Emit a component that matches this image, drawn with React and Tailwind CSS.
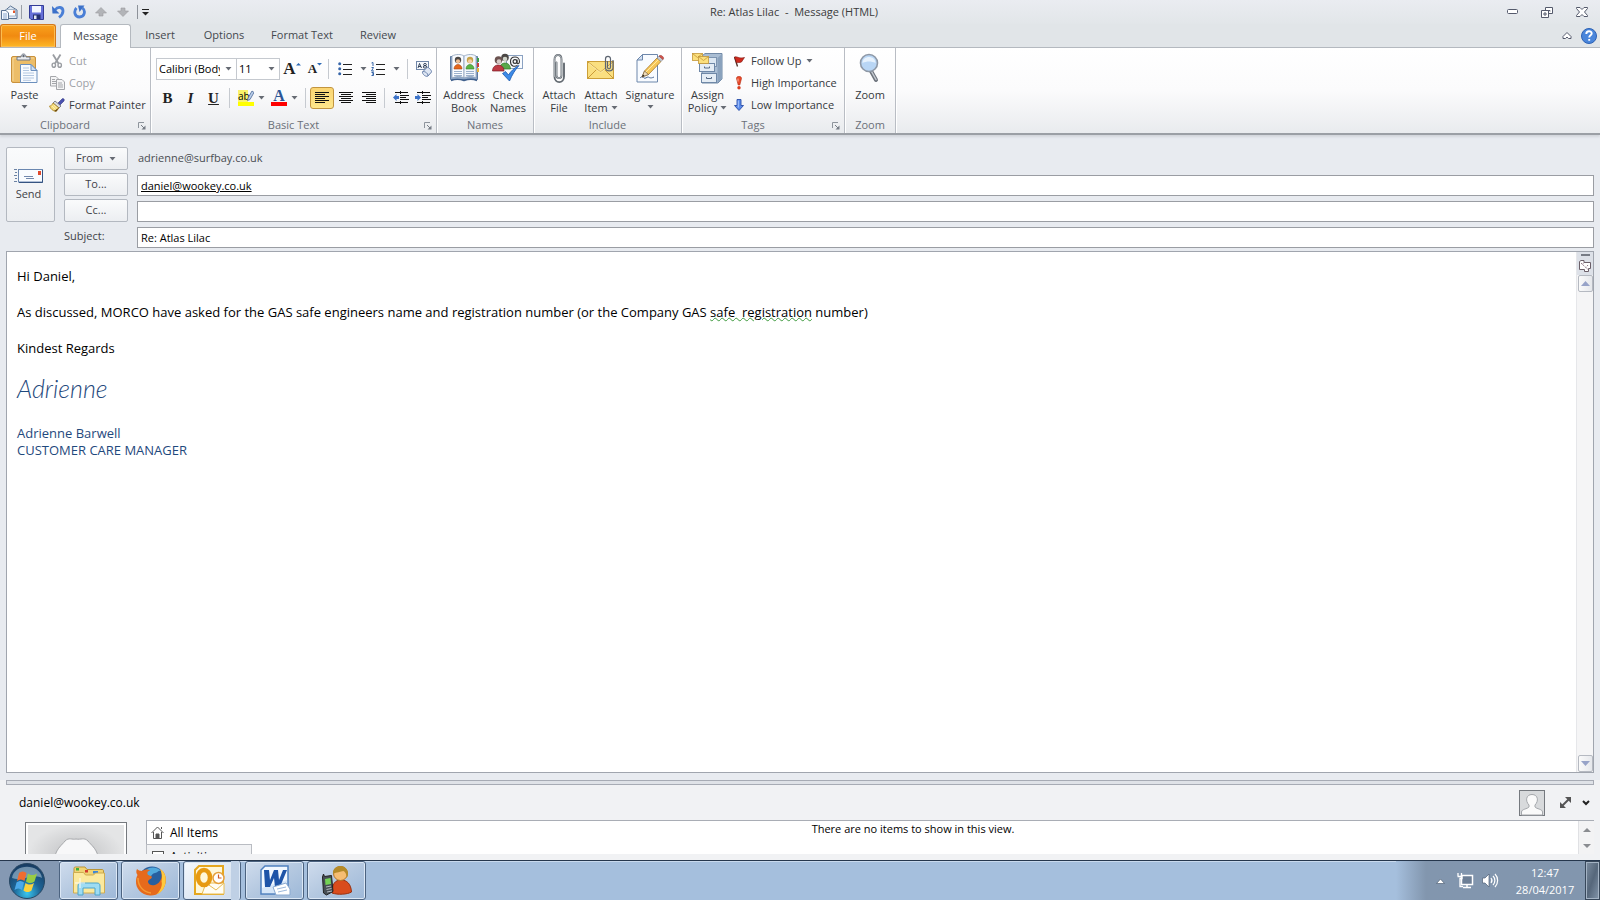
import React from "react";

const FONT = "font-['Open_Sans','Noto_Sans',sans-serif]";

function Caret({ className = "" }) {
  return (
    <svg width="7" height="4" viewBox="0 0 7 4" className={"shrink-0 " + className} aria-hidden="true">
      <path d="M0.5 0h6L3.5 3.6z" fill="#666b73" />
    </svg>
  );
}

function Launcher({ label }) {
  return (
    <button aria-label={label} className="absolute right-1 bottom-[3px]">
      <svg width="8" height="8" viewBox="0 0 8 8">
        <path d="M0.5 6V0.5H6" fill="none" stroke="#8e949c" />
        <path d="M3 3l3 3" stroke="#777d86" />
        <path d="M7.5 3.5v4h-4z" fill="#777d86" />
      </svg>
    </button>
  );
}

function Group({ label, width, launcher, children }) {
  return (
    <section
      aria-label={label}
      className={"relative flex shrink-0 flex-col border-r border-[#b9bdc4] shadow-[1px_0_0_#fff] " + width}
    >
      <div className="flex flex-1">{children}</div>
      <div className="h-[17px] text-center text-[11px] leading-[17px] text-[#6b7079]">{label}</div>
      {launcher && <Launcher label={label + " options"} />}
    </section>
  );
}

function BigButton({ icon, lines, width, caret }) {
  return (
    <button className={"flex shrink-0 flex-col items-center justify-start pt-1 text-[11px] leading-[13px] text-[#363a40] " + width}>
      <span className="flex h-[36px] items-start pt-px">{icon}</span>
      {lines.map((t, i) => (
        <span key={t} className="flex items-center gap-[3px] whitespace-nowrap">
          {t}
          {caret === "inline" && i === lines.length - 1 && <Caret />}
        </span>
      ))}
      {caret === "below" && <Caret className="mt-1" />}
    </button>
  );
}

function SmallButton({ icon, label, disabled, caret }) {
  return (
    <button
      disabled={disabled}
      className={
        "flex h-[22px] items-center gap-1 text-[11px] whitespace-nowrap " +
        (disabled ? "text-[#9da0a5]" : "text-[#363a40]")
      }
    >
      <span className="flex w-4 justify-center">{icon}</span>
      {label}
      {caret && <Caret />}
    </button>
  );
}

function Sep() {
  return <span className="h-[20px] w-px shrink-0 bg-[#c6cad0]" />;
}

/* ---------- icons ---------- */

const PasteIcon = () => (
  <svg width="28" height="32" viewBox="0 0 28 32">
    <rect x="0.5" y="3.5" width="24" height="26" rx="1.5" fill="#ecbd68" stroke="#c9913c" />
    <path d="M2 28V5h21" fill="none" stroke="#f7d798" />
    <path d="M6 7V4h4c0-4 5-4 5 0h4v3z" fill="#e8eaee" stroke="#6f7683" />
    <circle cx="12.500" cy="3" r="1.200" fill="#626a77" />
    <path d="M9.500 11.500H20l6 6V29.500H9.500z" fill="#f8fbff" stroke="#6b8fbd" />
    <path d="M20 11.500v6h6z" fill="#cfdff2" stroke="#6b8fbd" />
    <path d="M12 15h6M12 17.500h6M12 20h11M12 22.500h11M12 25h11M12 27.300h8" stroke="#b3c7e0" />
  </svg>
);

const CutIcon = () => (
  <svg width="12" height="14" viewBox="0 0 12 14" fill="none" stroke="#9a9da2">
    <path d="M2 0.500l5.500 9M9.500 0.500L4 9.500" strokeWidth="1.800" />
    <ellipse cx="2.800" cy="11.200" rx="1.700" ry="2.100" strokeWidth="1.400" />
    <ellipse cx="8.700" cy="11.200" rx="1.700" ry="2.100" strokeWidth="1.400" />
  </svg>
);

const CopyIcon = () => (
  <svg width="15" height="14" viewBox="0 0 15 14" fill="#f4f4f5" stroke="#a4a6aa">
    <path d="M0.500 0.500H6l2.500 2.500v7h-8z" />
    <path d="M2 3.500h3M2 5.500h4M2 7.500h4" />
    <path d="M6.500 3.500H12l2.500 2.500v7.500h-8z" />
    <path d="M8 7h4M8 9h5M8 11h5" />
  </svg>
);

const PainterIcon = () => (
  <svg width="16" height="14" viewBox="0 0 16 14">
    <path d="M9 5l4-4c1-1 3 0 2 2l-4 4z" fill="#4a51b0" stroke="#30357f" strokeWidth="0.600" />
    <path d="M6 3l6 5-2 2-6-5z" fill="#d9dbe0" stroke="#555a63" strokeWidth="0.700" />
    <path d="M4 5l6 5-3 3.500C4 13 1.500 11 0.500 8 2 8 3 7 4 5z" fill="#f5dc7a" stroke="#a88325" strokeWidth="0.800" />
    <path d="M3 8l4 4M5 7l3 3.500" stroke="#fff3bd" strokeWidth="0.800" />
    <path d="M5 13l5-3.500L7.500 13.500z" fill="#6b4b12" />
  </svg>
);

const AddressBookIcon = () => (
  <svg width="31" height="30" viewBox="0 0 31 30">
    <path d="M1.500 3.500h27v23h-27z" fill="#8ea6c5" stroke="#5f7ba0" />
    <path d="M28 5h2v4h-2z" fill="#3b9b48" /><path d="M28 10h2v4h-2z" fill="#c6403a" /><path d="M28 15h2v4h-2z" fill="#e9b53c" />
    <path d="M3 3c4-2 9-2 12 0v22c-3-2-8-2-12 0z" fill="#fafcff" stroke="#8b9fba" strokeWidth="0.800" />
    <path d="M15 3c4-2 9-2 12 0v22c-3-2-8-2-12 0z" fill="#f1f6fc" stroke="#8b9fba" strokeWidth="0.800" />
    <circle cx="9" cy="7" r="3.200" fill="#4b4745" /><circle cx="9" cy="8.300" r="2.100" fill="#eebd93" />
    <path d="M5 16c0-6 8-6 8 0z" fill="#e5671c" stroke="#a94410" strokeWidth="0.600" />
    <circle cx="21" cy="7" r="3.200" fill="#c8a246" /><circle cx="21" cy="8.300" r="2.100" fill="#f3cda6" />
    <path d="M17 16c0-6 8-6 8 0z" fill="#5cb545" stroke="#36822a" strokeWidth="0.600" />
    <path d="M5 18.500h8M5 20.500h8M5 22.500h8M17 18.500h8M17 20.500h8M17 22.500h8" stroke="#9bb0cb" />
    <path d="M2 27.500c6-2 10-1 13 0 3-1 8-2 13 0" fill="none" stroke="#3f5f8c" strokeWidth="1.400" />
  </svg>
);

const CheckNamesIcon = () => (
  <svg width="32" height="30" viewBox="0 0 32 30">
    <rect x="14.500" y="2.500" width="16" height="13" fill="#f9fbfe" stroke="#8ba2c2" />
    <circle cx="13" cy="4.500" r="3.800" fill="#4b4745" /><circle cx="13" cy="6" r="2.300" fill="#cfd3c8" />
    <path d="M7.500 16c0-8 11-8 11 0z" fill="#58a94b" stroke="#2e7a2a" strokeWidth="0.700" />
    <circle cx="6.500" cy="7" r="3.800" fill="#6b5350" /><circle cx="7" cy="8.500" r="2.300" fill="#d8c9c6" />
    <path d="M0.500 18c0-8 11.500-8 11.500 0z" fill="#bd3a44" stroke="#7b1d26" strokeWidth="0.700" />
    <circle cx="23" cy="8.500" r="1.900" fill="none" stroke="#333" strokeWidth="1.200" />
    <path d="M25 6.500v3c0 2 2.500 1.500 2.500-1 0-6-9-6-9 0 0 5 4 5.500 7 4" fill="none" stroke="#333" strokeWidth="1.100" />
    <path d="M10.500 20.500l3-2 3 3.500C19 18 22 15 27 12.500 23 17 20 22 17.500 28z" fill="#3d8be8" stroke="#1c58ae" strokeWidth="0.800" />
  </svg>
);

const Clip = ({ w, h }) => (
  <svg width={w} height={h} viewBox="0 0 12 30" fill="none" strokeLinecap="round">
    <path d="M3.500 9v13c0 3.500 5 3.500 5 0V6c0-6-7-6-7 0v17c0 7.500 9.500 7.500 9.500 0V10" stroke="#646b72" strokeWidth="1.900" />
    <path d="M3.500 9v13c0 3.500 5 3.500 5 0V6c0-6-7-6-7 0v17" stroke="#d4d9dc" strokeWidth="0.600" />
  </svg>
);

const AttachItemIcon = () => (
  <svg width="28" height="28" viewBox="0 0 28 28">
    <rect x="0.500" y="8.500" width="26" height="17" fill="#fadf80" stroke="#cc9f38" />
    <path d="M1 9l12.500 10L26 9M1 25l9-9M26 25l-9-9" fill="none" stroke="#c99a37" />
    <path d="M2 10.500l11.500 9 12-9" fill="none" stroke="#fff5c5" strokeWidth="0.700" />
    <path d="M20.500 8v6c0 2.500 3 2.500 3 0V6c0-3.500-5-3.500-5 0v8.500c0 4.500 7.500 4.500 7.500 0V7" fill="none" stroke="#5d6571" strokeWidth="1.200" />
  </svg>
);

const SignatureIcon = () => (
  <svg width="30" height="31" viewBox="0 0 30 31">
    <path d="M7.500 1.500h15v27.500h-20.500v-22z" fill="#f8fbff" stroke="#6d87ab" />
    <path d="M7.500 1.500V7H2z" fill="#d4e1f2" stroke="#6d87ab" />
    <path d="M5 25c2-2 3-1 4 0s3-1 4-1 2 2 6 0" fill="none" stroke="#4d6a96" />
    <path d="M7 24l2.500-6L22 5l4 3.500L13.500 21.500z" fill="#f6c758" stroke="#a8772a" strokeWidth="0.800" />
    <path d="M7 24l2.500-6 4 3.500z" fill="#efdcb9" stroke="#5b4a35" strokeWidth="0.600" /><path d="M7 24l1-2.500 1.500 1.300z" fill="#222" />
    <path d="M11 19L23.500 6.500" stroke="#ffe9a4" />
    <path d="M22 5l2-2 4 3.500-2 2z" fill="#c7ccd3" stroke="#7d838d" strokeWidth="0.600" />
    <path d="M24 3c2-2 6 1.500 4 3.500z" fill="#d8544c" stroke="#94302b" strokeWidth="0.600" />
  </svg>
);

const PolicyIcon = () => (
  <svg width="31" height="31" viewBox="0 0 31 31">
    <path d="M10 3l3-2.500h17V26l-4 4H10z" fill="#a9bdd3" stroke="#7189a6" />
    <path d="M25.500 5L30 1v25l-4.500 4z" fill="#8aa2bd" />
    <rect x="11.500" y="4.500" width="13" height="9" fill="#dce7f2" stroke="#7d94b0" />
    <rect x="7.500" y="10.500" width="15" height="8" fill="#e5edf5" stroke="#6f88a7" />
    <rect x="9.500" y="20.500" width="15" height="9" fill="#e5edf5" stroke="#6f88a7" />
    <path d="M12.500 13.500v1.500h5v-1.500M14.500 24v1.500h5V24" fill="none" stroke="#566b86" />
    <g fill="#fbdf7c" stroke="#c4973a" strokeWidth="0.800">
      <rect x="0.500" y="0.500" width="10" height="7" /><rect x="6.500" y="3.500" width="10" height="7" />
      <path d="M0.500 0.500l5 4 5-4M6.500 3.500l5 4 5-4" fill="none" />
    </g>
  </svg>
);

const FlagIcon = () => (
  <svg width="11" height="11" viewBox="0 0 11 11">
    <path d="M0.500 1l3 9.500" stroke="#4f3028" strokeWidth="1.300" />
    <path d="M0.500 1c3-1 4 2 10 0.500L7.500 6c-2 1-3 0-5 1z" fill="#cf2a1e" stroke="#7c1811" strokeWidth="0.600" />
  </svg>
);
const HighIcon = () => (
  <svg width="8" height="14" viewBox="0 0 8 14">
    <path d="M1.500 2.500c0-3 5-3 5 0L4.800 9H3.200z" fill="#e94a2a" stroke="#b02b13" strokeWidth="0.600" />
    <circle cx="4" cy="11.800" r="1.700" fill="#d83e20" /><path d="M3 2.500v3" stroke="#ffb9a2" />
  </svg>
);
const LowIcon = () => (
  <svg width="10" height="12" viewBox="0 0 10 12">
    <path d="M3 0.500h4v6h2.500L5 11.500 0.500 6.500H3z" fill="#5b8bea" stroke="#2b4fa9" strokeWidth="0.900" />
    <path d="M4.300 1.500v7" stroke="#a9c6ff" />
  </svg>
);
const ZoomIcon = () => (
  <svg width="22" height="31" viewBox="0 0 22 31">
    <path d="M12 18l5 9" stroke="#6e747d" strokeWidth="4" strokeLinecap="round" />
    <path d="M12.500 18.500l4.500 8" stroke="#c4c9d0" strokeWidth="1.500" strokeLinecap="round" />
    <circle cx="10" cy="10" r="8.500" fill="#b9d6f5" stroke="#8e98a6" strokeWidth="1.600" />
    <path d="M3.500 10c0-8 13-8 13 0-4-2-9-2-13 0z" fill="#e7f2fd" />
  </svg>
);

const rowsFor = {
  left: [[0, 14], [0, 10], [0, 14], [0, 10], [0, 14], [0, 10]],
  center: [[0, 14], [2, 12], [0, 14], [2, 12], [0, 14], [2, 12]],
  right: [[0, 14], [4, 14], [0, 14], [4, 14], [0, 14], [4, 14]],
};
function AlignIcon({ kind }) {
  return (
    <svg width="14" height="12" viewBox="0 0 14 12" stroke="#111" shapeRendering="crispEdges">
      {rowsFor[kind].map(([a, b], i) => (
        <path key={i} d={`M${a} ${i * 2 + 0.5}H${b}`} />
      ))}
    </svg>
  );
}
function IndentIcon({ out }) {
  return (
    <svg width="16" height="14" viewBox="0 0 16 14">
      <path d="M2 1.500h13M8 4.500h8M8 6.500h5M8 8.500h8M2 11.500h13" stroke="#111" shapeRendering="crispEdges" />
      <path d="M7.500 0v14" stroke="#111" strokeDasharray="1 1" />
      <path d={out ? "M0 6.500L3.500 3v2H6v3H3.500v2z" : "M6 6.500L2.500 3v2H0v3h2.500v2z"} fill="#3c73c8" />
    </svg>
  );
}
const BulletsIcon = () => (
  <svg width="15" height="14" viewBox="0 0 15 14">
    <g fill="#3564a8"><circle cx="1.700" cy="1.800" r="1.500" /><circle cx="1.700" cy="6.800" r="1.500" /><circle cx="1.700" cy="11.800" r="1.500" /></g>
    <path d="M5 2.500h9M5 7.500h9M5 12.500h9" stroke="#222" shapeRendering="crispEdges" />
  </svg>
);
const NumbersIcon = () => (
  <svg width="15" height="14" viewBox="0 0 15 14">
    <path d="M0.500 1L2 0.500V4M0.500 5.500h2L0.500 9H3M0.500 10.500h2v3h-2M1 12h1.500" fill="none" stroke="#3564a8" />
    <path d="M5 2.500h9M5 7.500h9M5 12.500h9" stroke="#222" shapeRendering="crispEdges" />
  </svg>
);
const ClearIcon = () => (
  <svg width="17" height="16" viewBox="0 0 17 16">
    <rect x="0.500" y="0.500" width="12" height="8" fill="#f6f9fd" stroke="#7187a8" />
    <path d="M2 7l1.500-4.500L5.500 7M2.500 5.500H5" fill="none" stroke="#25354f" strokeWidth="0.900" />
    <ellipse cx="9" cy="3.600" rx="1.400" ry="1.100" fill="none" stroke="#25354f" strokeWidth="0.900" />
    <ellipse cx="9" cy="5.900" rx="1.700" ry="1.200" fill="none" stroke="#25354f" strokeWidth="0.900" />
    <path d="M6.500 11L11 6.500c1-1 5 3 4.500 4.500L12 15c-2 1.500-6-2-5.500-4z" fill="#dfe7f4" stroke="#6a82ab" />
    <path d="M6.500 11c1-1.500 6 1 5.500 4" fill="none" stroke="#6a82ab" />
  </svg>
);
const HighlightIcon = () => (
  <span className="flex w-4 flex-col">
    <span className="relative flex h-[12px] items-center bg-gradient-to-r from-[#fbf36a] from-60% to-transparent to-60% font-['Open_Sans',sans-serif] text-[10px] leading-[12px] text-black">
      ab
      <svg className="absolute top-0 right-0" width="8" height="11" viewBox="0 0 8 11">
        <path d="M2 8l4-7 2 1.500L4 9.500 1.500 10.500z" fill="#b8cdea" stroke="#4b6794" strokeWidth="0.800" />
      </svg>
    </span>
    <span className="h-[4px] bg-[#ffff00]" />
  </span>
);

/* ---------- chrome ---------- */

function TitleBar() {
  return (
    <header className="flex h-6 items-center bg-gradient-to-b from-[#eaecf1] to-[#e2e6e9]">
      <div className="flex flex-1 items-center">
        <svg width="17" height="15" viewBox="0 0 17 15" className="ml-px">
          <path d="M3.500 6L9.500 1l6.500 4v8.500H3.500z" fill="#dfe8f4" stroke="#5b7393" />
          <path d="M5 4.500h9.500V11H5z" fill="#fff" stroke="#8499b5" strokeWidth="0.700" />
          <path d="M12 5.500h2v2.500h-2z" fill="#e2582c" />
          <path d="M0.500 5.500H5L7.500 8v6.500h-7z" fill="#f5f9ff" stroke="#5b7393" /><path d="M2 9h4M2 11h4M2 13h4" stroke="#8ba7cc" />
        </svg>
        <span className="ml-[3px] h-[14px] w-px bg-[#9a9fa7]" />
        <button aria-label="Save" className="ml-[7px]">
          <svg width="15" height="15" viewBox="0 0 15 15">
            <path d="M0.500 0.500h14v14H2L0.500 13z" fill="#6670d8" stroke="#333c96" />
            <path d="M3 1h9v6.500H3z" fill="#f3f6ff" /><path d="M4 9.500h7.500V14H4z" fill="#25306f" /><path d="M5 10.500h2.500V14H5z" fill="#e2e6f5" />
          </svg>
        </button>
        <button aria-label="Undo" className="ml-2">
          <svg width="13" height="14" viewBox="0 0 13 14">
            <path d="M3 5c3-4 8-3 8 1 0 3-2 5-4 6.500" fill="none" stroke="#4a7fd6" strokeWidth="2.800" />
            <path d="M0 1l0.500 7.500H7.500z" fill="#3b70c9" />
          </svg>
        </button>
        <button aria-label="Repeat" className="ml-2">
          <svg width="13" height="14" viewBox="0 0 13 14">
            <path d="M3.500 3C0.500 6 1.500 12 6.500 12s6.500-6 3-9" fill="none" stroke="#4a7fd6" strokeWidth="2.800" />
            <path d="M5 0.500h6.500l-5 6.500z" fill="#3b70c9" />
          </svg>
        </button>
        <button aria-label="Previous item" className="ml-[9px]">
          <svg width="12" height="10" viewBox="0 0 12 10"><path d="M6 0.500L11.500 6H8V9H4V6H0.500z" fill="#b2b4b8" stroke="#9a9ca0" strokeWidth="0.600" /></svg>
        </button>
        <button aria-label="Next item" className="ml-[10px]">
          <svg width="12" height="10" viewBox="0 0 12 10"><path d="M6 9.500L11.500 4H8V1H4v3H0.500z" fill="#b2b4b8" stroke="#9a9ca0" strokeWidth="0.600" /></svg>
        </button>
        <span className="ml-2 h-[14px] w-px bg-[#8d9299]" />
        <button aria-label="Customize toolbar" className="ml-1">
          <svg width="7" height="7" viewBox="0 0 7 7"><path d="M0 0.500h7" stroke="#222" /><path d="M0 3h7L3.500 6.500z" fill="#222" /></svg>
        </button>
      </div>
      <h1 className="text-[11px] whitespace-pre text-[#3b3b3b]">Re: Atlas Lilac  -  Message (HTML)</h1>
      <div className="flex flex-1 items-center justify-end gap-[23px] pr-3">
        <button aria-label="Minimize"><svg width="11" height="6" viewBox="0 0 11 6"><rect x="0.500" y="0.500" width="10" height="4" rx="1" fill="#fff" stroke="#555a6c" /></svg></button>
        <button aria-label="Restore">
          <svg width="12" height="11" viewBox="0 0 12 11" fill="#fff" stroke="#555a6c"><path d="M4.500 0.500h7v6h-7z" /><path d="M7 3.500h2v1" fill="none" /><path d="M0.500 3.500h7v7h-7z" /><path d="M3 6h2v2H3z" /></svg>
        </button>
        <button aria-label="Close">
          <svg width="12" height="10" viewBox="0 0 12 10"><path d="M0.500 0.500H4l2 2 2-2h3.500v1L8.500 5l3 3.500v1H8l-2-2-2 2H0.500v-1l3-3.500-3-3.500z" fill="#fff" stroke="#555a6c" /></svg>
        </button>
      </div>
    </header>
  );
}

function Tabs() {
  return (
    <nav className="flex h-6 items-end border-b border-[#b4b9bf] bg-[#e1e5e8] text-[11px] text-[#44484e]">
      <button className="h-[23px] w-14 rounded-t-[3px] border border-b-0 border-[#d4781a] bg-gradient-to-b from-[#f8a21c] via-[#f18a10] to-[#fdb827] text-white shadow-[inset_0_0_0_1px_#fcbd51]">
        File
      </button>
      <button className="-mb-px ml-1 h-6 w-[71px] rounded-t-[3px] border border-b-0 border-[#b4b9bf] bg-white pb-px">Message</button>
      <button className="ml-1 h-[23px] w-[50px]">Insert</button>
      <button className="ml-[9px] h-[23px] w-[60px]">Options</button>
      <button className="ml-[9px] h-[23px] w-[78px]">Format Text</button>
      <button className="ml-[9px] h-[23px] w-[56px]">Review</button>
      <div className="flex h-[23px] flex-1 items-center justify-end gap-[9px] pr-[3px]">
        <button aria-label="Collapse ribbon">
          <svg width="10" height="8" viewBox="0 0 10 8"><path d="M5 0.500l4 4v2H6.500L5 5 3.500 6.500H1v-2z" fill="#fff" stroke="#555a6c" /></svg>
        </button>
        <button aria-label="Help">
          <svg width="16" height="16" viewBox="0 0 16 16">
            <circle cx="8" cy="8" r="7.500" fill="#4a86db" stroke="#2d62b4" />
            <path d="M5.300 6c0-3.600 5.400-3.400 5.400-0.500 0 1.800-2.500 1.800-2.500 4M8.200 11v1.700" fill="none" stroke="#fff" strokeWidth="1.900" />
          </svg>
        </button>
      </div>
    </nav>
  );
}

function Combo({ label, value, width }) {
  return (
    <span className={"relative flex h-[22px] items-center border border-[#c5c9cf] bg-white " + width}>
      <select aria-label={label} className="h-full w-full appearance-none bg-transparent pr-4 pl-[2px] text-[11px] text-black">
        <option>{value}</option>
      </select>
      <Caret className="pointer-events-none absolute right-1" />
    </span>
  );
}

function Ribbon() {
  const tool = "flex h-[22px] items-center justify-center shrink-0 ";
  return (
    <div className="flex h-[87px] border-b-2 border-[#9b9fa5] bg-gradient-to-b from-white via-[#fbfbfc] to-[#e9ebee] shadow-[0_2px_2px_#d3d6dc]">
      <Group label="Clipboard" width="w-[151px] pr-5" launcher>
        <BigButton icon={<PasteIcon />} lines={["Paste"]} width="w-[49px]" caret="below" />
        <div className="flex flex-col pt-[2px]">
          <SmallButton icon={<CutIcon />} label="Cut" disabled />
          <SmallButton icon={<CopyIcon />} label="Copy" disabled />
          <SmallButton icon={<PainterIcon />} label="Format Painter" />
        </div>
      </Group>
      <Group label="Basic Text" width="w-[286px]" launcher>
        <div className="flex flex-col gap-[7px] pt-[10px] pl-[5px] text-[#222]">
          <div className="flex items-center">
            <Combo label="Font" value="Calibri (Body)" width="w-[81px]" />
            <Combo label="Font size" value="11" width="-ml-px w-[44px]" />
            <button aria-label="Grow font" className={tool + "w-6 font-['Liberation_Serif',serif] text-[17px] font-bold"}>
              A<svg width="5" height="14" viewBox="0 0 5 14"><path d="M0 3.500L2.500 1 5 3.500z" fill="#2f6bb5" /></svg>
            </button>
            <button aria-label="Shrink font" className={tool + "w-[22px] font-['Liberation_Serif',serif] text-[13px] font-bold"}>
              A<svg width="5" height="14" viewBox="0 0 5 14"><path d="M0 1L2.500 3.500 5 1z" fill="#2f6bb5" /></svg>
            </button>
            <span className="ml-[2px] flex"><Sep /></span>
            <button aria-label="Bullets" className={tool + "ml-[9px] gap-[7px]"}><BulletsIcon /><Caret /></button>
            <button aria-label="Numbering" className={tool + "ml-1 gap-[7px]"}><NumbersIcon /><Caret /></button>
            <span className="ml-[7px] flex"><Sep /></span>
            <button aria-label="Clear formatting" className={tool + "ml-2"}><ClearIcon /></button>
          </div>
          <div className="flex items-center font-['Liberation_Serif',serif] text-[15px]">
            <button aria-label="Bold" className={tool + "w-[23px] font-bold"}>B</button>
            <button aria-label="Italic" className={tool + "w-[23px] italic font-bold"}>I</button>
            <button aria-label="Underline" className={tool + "w-[23px] underline font-bold"}>U</button>
            <span className="ml-1 flex"><Sep /></span>
            <button aria-label="Highlight" className={tool + "ml-2 gap-1"}><HighlightIcon /><Caret /></button>
            <button aria-label="Font color" className={tool + "ml-[6px] gap-1"}>
              <span className="flex w-4 flex-col items-center">
                <span className="h-[12px] text-[16px] leading-[12px] font-bold text-[#2c5596]">A</span>
                <span className="h-[4px] w-4 bg-[#fe0000]" />
              </span>
              <Caret />
            </button>
            <span className="ml-[7px] flex"><Sep /></span>
            <button aria-label="Align left" className={tool + "ml-1 w-6 rounded-[3px] border border-[#c2953f] bg-gradient-to-b from-[#fbd572] to-[#fee68a]"}><AlignIcon kind="left" /></button>
            <button aria-label="Center" className={tool + "w-[23px]"}><AlignIcon kind="center" /></button>
            <button aria-label="Align right" className={tool + "w-[23px]"}><AlignIcon kind="right" /></button>
            <span className="ml-1 flex"><Sep /></span>
            <button aria-label="Decrease indent" className={tool + "ml-2"}><IndentIcon out /></button>
            <button aria-label="Increase indent" className={tool + "ml-[6px]"}><IndentIcon /></button>
          </div>
        </div>
      </Group>
      <Group label="Names" width="w-[97px]">
        <BigButton icon={<AddressBookIcon />} lines={["Address", "Book"]} width="ml-1 w-[46px]" />
        <BigButton icon={<CheckNamesIcon />} lines={["Check", "Names"]} width="w-[42px]" />
      </Group>
      <Group label="Include" width="w-[148px]">
        <BigButton icon={<Clip w={12} h={31} />} lines={["Attach", "File"]} width="ml-1 w-[42px]" />
        <BigButton icon={<AttachItemIcon />} lines={["Attach", "Item"]} width="w-[42px]" caret="inline" />
        <BigButton icon={<SignatureIcon />} lines={["Signature"]} width="w-[56px]" caret="below" />
      </Group>
      <Group label="Tags" width="w-[163px] pr-5" launcher>
        <BigButton icon={<PolicyIcon />} lines={["Assign", "Policy"]} width="ml-[3px] w-[45px]" caret="inline" />
        <div className="flex flex-col pt-[2px] pl-px">
          <SmallButton icon={<FlagIcon />} label="Follow Up" caret />
          <SmallButton icon={<HighIcon />} label="High Importance" />
          <SmallButton icon={<LowIcon />} label="Low Importance" />
        </div>
      </Group>
      <Group label="Zoom" width="w-[51px]">
        <BigButton icon={<ZoomIcon />} lines={["Zoom"]} width="w-full" />
      </Group>
    </div>
  );
}

function Compose() {
  const btn =
    "flex h-[23px] items-center justify-center gap-[6px] rounded-[2px] border border-[#b3b8c0] bg-gradient-to-b from-[#fafbfc] to-[#eceef1] text-[11px] text-[#3f4247]";
  const field = "h-[21px] w-full border border-[#9a9da3] bg-white px-[3px] text-[11px] text-black outline-none";
  return (
    <form className="flex gap-[9px] px-[6px] pt-3" onSubmit={(e) => e.preventDefault()}>
      <button className="flex h-[75px] w-[49px] shrink-0 flex-col items-center justify-center gap-[3px] rounded-[2px] border border-[#b3b8c0] bg-gradient-to-b from-[#fafbfc] to-[#eceef1] pt-[2px] pr-1 text-[11px] text-[#3f4247]">
        <svg width="29" height="14" viewBox="0 0 29 14">
          <path d="M0 0.500h3M1 3.500h2M0 6.500h3M1 9.500h2M0 12.500h3" stroke="#6c82a3" />
          <rect x="4.500" y="0.500" width="24" height="12.500" fill="#f9fcff" stroke="#6a87b0" />
          <path d="M28.500 1v12.500H5" fill="none" stroke="#365582" />
          <path d="M24 2h3v4h-3z" fill="#e0492c" /><path d="M10 7.500h9M12 9.500h8" stroke="#7289ad" />
        </svg>
        Send
      </button>
      <div className="grid flex-1 auto-rows-[23px] grid-cols-[64px_1fr] items-end gap-x-[9px] gap-y-[3px] pb-[3px]">
        <button className={btn}>From <Caret /></button>
        <span className="self-center pl-px text-[11px] text-[#4a4d52]">adrienne@surfbay.co.uk</span>
        <button className={btn}>To...</button>
        <input aria-label="To" defaultValue="daniel@wookey.co.uk" className={field + " underline"} />
        <button className={btn}>Cc...</button>
        <input aria-label="Cc" className={field} />
        <label htmlFor="subject" className="self-center text-[11px] text-[#3f4247]">Subject:</label>
        <input id="subject" defaultValue="Re: Atlas Lilac" className={field} />
      </div>
    </form>
  );
}

function ScrollArrow({ down }) {
  return (
    <button aria-label={down ? "Scroll down" : "Scroll up"} className="flex h-[17px] w-[15px] items-center justify-center rounded-[2px] border border-[#b5b9c1] bg-gradient-to-r from-[#fafafa] to-[#e6e8ec]">
      <svg width="9" height="5" viewBox="0 0 9 5"><path d={down ? "M0 0h9L4.500 5z" : "M0 5h9L4.500 0z"} fill="#97a3c8" /></svg>
    </button>
  );
}

function Body() {
  return (
    <main className="mx-[6px] flex flex-1 border border-[#a0a5ae] bg-white">
      <div
        role="textbox"
        aria-label="Message body"
        tabIndex={0}
        className="flex-1 px-[10px] pt-[15px] text-[13px] leading-[18px] text-black"
      >
        <p className="mb-[18px]">Hi Daniel,</p>
        <p className="mb-[18px] whitespace-pre-wrap">
          As discussed, MORCO have asked for the GAS safe engineers name and registration number (or the Company GAS{" "}
          <span className="underline decoration-[#3f9a3f] decoration-wavy decoration-1 underline-offset-0">safe  registration</span> number)
        </p>
        <p className="mb-[18px]">Kindest Regards</p>
        <p className="mb-6 font-['Lato',cursive] text-[25px] leading-[26px] font-light text-[#1f497d] italic">Adrienne</p>
        <p className="leading-[17px] text-[#1f497d]">Adrienne Barwell</p>
        <p className="leading-[17px] text-[#1f497d]">CUSTOMER CARE MANAGER</p>
      </div>
      <div className="flex w-[17px] flex-col items-center border-l border-[#e6e7ea] bg-[#f5f5f6]">
        <div className="flex h-[23px] w-full flex-col items-center gap-1 bg-[#dde1e8] pt-[2px]">
          <span className="h-[2px] w-[9px] bg-[#777c85]" />
          <svg width="12" height="12" viewBox="0 0 12 12" fill="#fff" stroke="#6b5f68"><path d="M0.500 1.500L2 0.500h3v2h6.500v6H9.500v3h-4v-2h-5z" /><path d="M2 3l7.500 7M5 2.500L3 5M9 5L7 7.500" stroke="#8d7684" strokeDasharray="1.500 1" /></svg>
        </div>
        <ScrollArrow />
        <span className="flex-1" />
        <ScrollArrow down />
      </div>
    </main>
  );
}

function PeoplePane() {
  return (
    <section aria-label="People pane" className="mt-[7px] flex h-[80px] flex-col overflow-hidden bg-[#f1f2f4] px-[6px]">
      <div className="h-[5px] shrink-0 border border-[#a7abb4] bg-[#dfe2e7]" />
      <div className="flex h-[35px] shrink-0 items-center pl-[13px]">
        <span className="flex-1 pt-px text-[12px] text-black">daniel@wookey.co.uk</span>
        <svg className="mr-[15px]" width="26" height="26" viewBox="0 0 26 26">
          <rect x="0.500" y="0.500" width="25" height="25" fill="#d8dadc" stroke="#75797e" />
          <path d="M2.500 25v-3c0-3 6-3 7.500-5v-2C6 11 7 4.500 13 4.500S20 11 16 15v2c1.500 2 7.500 2 7.500 5v3z" fill="#fafafa" stroke="#a4a7ab" />
        </svg>
        <button aria-label="Expand" className="mr-[11px]">
          <svg width="11" height="11" viewBox="0 0 11 11"><path d="M2 9l7-7" stroke="#555" strokeWidth="2" /><path d="M5 0h6v6zM0 5v6h6z" fill="#555" /></svg>
        </button>
        <button aria-label="Collapse pane" className="mr-1">
          <svg width="8" height="6" viewBox="0 0 8 6"><path d="M1 1l3 3 3-3" fill="none" stroke="#222" strokeWidth="2" /></svg>
        </button>
      </div>
      <div className="flex h-[34px] shrink-0 overflow-hidden">
        <div className="ml-[19px] h-full w-[102px] shrink-0 pt-[2px]">
          <svg width="102" height="32" viewBox="0 0 102 32">
            <defs>
              <radialGradient id="photo"><stop offset="0" stopColor="#bfc0c2" /><stop offset="1" stopColor="#e4e5e6" /></radialGradient>
            </defs>
            <rect x="0.500" y="0.500" width="101" height="40" fill="#fff" stroke="#75797e" />
            <rect x="3" y="3" width="96" height="60" fill="url(#photo)" />
            <path d="M30 34c2-8 7-11 10-15 4-4 7-1 11-2 5 1 8-2 12 2 3 4 8 7 10 15z" fill="#f8f8f9" stroke="#a6a8ab" />
          </svg>
        </div>
        <div className="ml-[19px] flex min-w-0 flex-1 border-t border-l border-[#a9adb5] bg-white">
          <div className="w-[105px] shrink-0">
            <button className="flex h-[23px] w-full items-center gap-[6px] pl-1 text-[12px] text-black">
              <svg width="13" height="13" viewBox="0 0 13 13" fill="none" stroke="#555"><path d="M0.500 7L6.500 1l6 6M2.500 6v6.500h8V6M10.500 3V1" /><path d="M5 8h3v4.500H5z" fill="#555" /></svg>
              All Items
            </button>
            <button className="-ml-px flex h-[26px] w-[106px] items-center gap-[6px] border border-[#b9bcc2] bg-[#f1f2f4] pl-[5px] text-[12px] text-black">
              <svg width="12" height="12" viewBox="0 0 12 12"><rect x="0.500" y="0.500" width="11" height="11" fill="#fff" stroke="#555" /></svg>
              Activities
            </button>
          </div>
          <p className="flex-1 pr-1 text-center text-[11px] leading-[15px] text-black">There are no items to show in this view.</p>
          <div className="flex w-4 flex-col items-center justify-center gap-3 border-l border-[#e0e1e4] bg-[#f3f3f4]">
            <svg width="8" height="4" viewBox="0 0 8 4"><path d="M0 4h8L4 0z" fill="#8a8c90" /></svg>
            <svg width="8" height="4" viewBox="0 0 8 4"><path d="M0 0h8L4 4z" fill="#8a8c90" /></svg>
          </div>
        </div>
      </div>
    </section>
  );
}

function TaskButton({ label, children, active, width = "w-[59px]" }) {
  return (
    <button
      aria-label={label}
      className={
        "mr-[3px] flex h-[39px] shrink-0 items-center justify-center rounded-[3px] border border-[#4c6380] shadow-[inset_0_0_0_1px_#dbe7f5] " +
        width +
        (active ? " bg-gradient-to-br from-[#f4f8fc] to-[#cfdcec]" : " bg-gradient-to-br from-[#cfdced] via-[#b4c8e0] to-[#9db8d8]")
      }
    >
      {children}
    </button>
  );
}

function Taskbar() {
  return (
    <footer className="flex h-10 border-t border-[#26374d] bg-[#a5bfdd] shadow-[inset_0_1px_0_#c9daee]">
      <div className="flex w-[59px] shrink-0 items-center justify-center bg-[#8599b3] pr-[6px]">
        <button aria-label="Start">
          <svg width="38" height="38" viewBox="0 0 38 38">
            <defs>
              <radialGradient id="orb" cx="0.500" cy="0.850" r="0.850"><stop offset="0" stopColor="#39c6ee" /><stop offset="0.450" stopColor="#1d6495" /><stop offset="1" stopColor="#17395f" /></radialGradient>
            </defs>
            <circle cx="19" cy="19" r="17.500" fill="url(#orb)" stroke="#274763" />
            <path d="M4 16C6 1 32 1 34 16 25 11 13 20 4 16z" fill="#c5d9e8" opacity="0.500" />
            <path d="M11 11c3-2 5-2 7.500 0l-2 8c-2.500-2-5-2-7.500 0z" fill="#ee6d31" />
            <path d="M20 11.500c3 2 5 2 9 0l-2.500 8c-3 2-5.500 2-8.500 0z" fill="#99cc43" />
            <path d="M8.500 20.500c3-2 5-2 7.500 0l-2 7.500c-2.500-2-5-2-7.500 0z" fill="#4ba9ea" />
            <path d="M17.500 21c3 2 5.500 2 8.500 0l-2.500 7.500c-3 2-5 2-8 0z" fill="#fcd23c" />
          </svg>
        </button>
      </div>
      <TaskButton label="File Explorer">
        <svg width="34" height="30" viewBox="0 0 34 30">
          <path d="M2 2.500c0-1 0.500-1.500 1.500-1.500H13l2 2.500h15c1 0 1.500 0.500 1.500 1.500V26H2z" fill="#f0d374" stroke="#b99539" />
          <path d="M4 2h3v2.500H4z" fill="#3eb03a" /><path d="M13 4h3v2.500h-3z" fill="#d23a2c" /><path d="M21 5h5v2.500h-5z" fill="#3b87d8" />
          <path d="M1.500 6.500h10l2 2.500h8l2-2h9V27h-31z" fill="#fbe99e" stroke="#cfac50" />
          <path d="M6 29V20c0-2 1-3 3-3h16c2 0 3 1 3 3v9h-5v-7H11v7z" fill="#9edcf3" stroke="#4ca4cb" />
          <path d="M8 12v10M3 17h10" stroke="#fff" opacity="0.900" />
        </svg>
      </TaskButton>
      <TaskButton label="Firefox">
        <svg width="32" height="32" viewBox="0 0 32 32">
          <circle cx="17" cy="15" r="13.500" fill="#285f9f" />
          <path d="M11 5c4-4 12-3 15 1-3-1-3 2-6 2s-3 4-6 3-4-3-3-6z" fill="#52a9dc" />
          <path d="M2 4c1 1 3 2 5 2 3-2 7-2 8 0-3 0-3 2-2 4 2 1 4 1 4 2-1 3-4 2-4 5 1 4 6 4 9 2 5-3 6-10 3-15 5 3 6.500 8 5.500 14C29 26 22 31 15 30.500 6 30 0.500 23 1 16c0-3 1-5 1.500-6C1 8 1 6 2 4z" fill="#e66a1c" />
          <path d="M25 4c5 3 6.500 8 5.500 14-1 6-5 10-9 11.500 5-5 6-10 5-13 1-4 0.500-9-1.500-12.500z" fill="#ffc93c" />
          <path d="M3 13c0 8 5 14 13 15" fill="none" stroke="#f59a33" strokeWidth="1.500" />
        </svg>
      </TaskButton>
      <TaskButton label="Outlook" active width="-mr-1! w-[52px]">
        <svg width="32" height="31" viewBox="0 0 32 31">
          <path d="M6 1h24v28H2V5z" fill="#fff7d8" stroke="#e5a71f" strokeWidth="2" />
          <path d="M13 18h18v11H9z" fill="#fffdf3" stroke="#e8bd55" /><path d="M13 18l10 7 8-7" fill="none" stroke="#e8bd55" />
          <ellipse cx="11" cy="12.500" rx="6" ry="7.500" fill="none" stroke="#e79a12" strokeWidth="4.500" />
          <circle cx="25.500" cy="13" r="5.500" fill="#fff" stroke="#e5a03a" strokeWidth="1.500" /><path d="M25.500 9.500V13h3" fill="none" stroke="#cd5b25" strokeWidth="1.200" />
        </svg>
      </TaskButton>
      <span className="mr-1 h-[39px] w-[10px] rounded-r-[3px] border-r border-[#4c6380] bg-[#bfd0e5] shadow-[inset_-1px_0_0_#dbe7f5]" />
      <TaskButton label="Word">
        <svg width="32" height="31" viewBox="0 0 32 31">
          <path d="M6 1h23v28H2V5z" fill="#f2f8ff" stroke="#4f80bf" strokeWidth="1.500" />
          <path d="M3 23l25-8v13H3z" fill="#d6e6f8" />
          <path d="M5 5h5l1 10 4-10h4l1 10 4-10h4l-7 17h-5l-1-9-4 9H6z" fill="#1e54a8" />
          <path d="M14 22l13-4 4 6v6H17z" fill="#fff" stroke="#89a9d1" /><path d="M18 24l9-2M19 27l9-2" stroke="#9db9dc" />
        </svg>
      </TaskButton>
      <TaskButton label="Phone">
        <svg width="32" height="31" viewBox="0 0 32 31">
          <path d="M11 28c0-9 3-13 9-13s10 4 10.500 12c-4 2.500-14 3-19.500 1z" fill="#d94c1d" stroke="#99300f" />
          <circle cx="19.500" cy="8.500" r="7" fill="#f6bd72" stroke="#b67325" />
          <path d="M12 9c-1-10 15-11 15 0 0 2-1 3-1.500 4 0-4-1-6-3-7-3 1-7 1-10.500 3z" fill="#b58a28" />
          <path d="M1.500 12l1-3 1 2.500 7-1 1.500 16-6.500 3.500-3-2z" fill="#474e55" stroke="#222" /><path d="M4 14l5.500-1 0.500 6-5.500 1z" fill="#74d356" />
          <path d="M5 22l5-1M5.500 24.500l5-1M6 27l5-1" stroke="#b5bbc1" />
        </svg>
      </TaskButton>
      <div className="flex-1" />
      <div className="flex shrink-0 items-center bg-gradient-to-r from-[#a5bfdd] to-[#8296ae] to-[30px] pl-[40px] text-white">
        <button aria-label="Show hidden icons"><svg width="9" height="6" viewBox="0 0 9 6"><path d="M0.500 5.500h8L4.500 1z" fill="#fff" stroke="#526377" strokeWidth="0.700" /></svg></button>
        <svg className="ml-3" width="17" height="16" viewBox="0 0 17 16">
          <rect x="4.500" y="2.500" width="11" height="9" fill="#6d7f96" stroke="#fff" strokeWidth="1.500" /><path d="M10 12v2M6 14.500h8" stroke="#fff" strokeWidth="1.500" />
          <path d="M1 0v3M4.500 0v3M0.500 3.500H5v2H3v8h3" fill="none" stroke="#fff" strokeWidth="1.300" />
        </svg>
        <svg className="ml-2" width="17" height="15" viewBox="0 0 17 15">
          <path d="M0.500 5H3l4-4v13l-4-4H0.500z" fill="#fff" stroke="#4f6075" strokeWidth="0.700" />
          <path d="M9 5c1.200 1.500 1.200 3.500 0 5M11 3c2.500 2.500 2.500 6.500 0 9M13 1c3.500 3.500 3.500 9.500 0 13" fill="none" stroke="#fff" strokeWidth="1.200" />
        </svg>
        <div className="ml-[14px] w-[64px] text-center text-[11px] leading-[17px]">
          <div>12:47</div>
          <div>28/04/2017</div>
        </div>
        <button aria-label="Show desktop" className="ml-2 h-full w-[15px] border border-[#37475a] bg-gradient-to-br from-[#7c8da0] via-[#56677b] to-[#8496ab] shadow-[inset_0_0_0_1px_#a4b3c4]" />
      </div>
    </footer>
  );
}

export default function App() {
  return (
    <div className={"flex min-h-screen flex-col bg-[#e8ebf0] " + FONT}>
      <TitleBar />
      <Tabs />
      <Ribbon />
      <Compose />
      <Body />
      <PeoplePane />
      <Taskbar />
    </div>
  );
}
